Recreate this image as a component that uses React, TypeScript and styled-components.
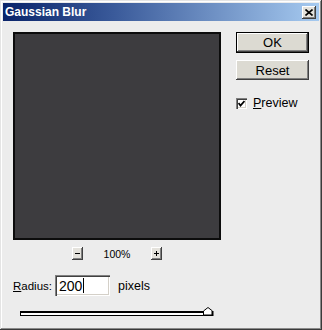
import { createGlobalStyle, styled } from "styled-components";

const GlobalStyle = createGlobalStyle`
  body {
    margin: 0;
    background: #ececec;
    font-family: "Liberation Sans", Arial, sans-serif;
  }
`;

const Window = styled.div`
  width: 322px;
  height: 330px;
  box-sizing: border-box;
  padding: 3px;
  background: #ececec;
  box-shadow: inset -1px -1px #3a3a3a, inset 1px 1px #e4e4e4,
    inset -2px -2px #8a8a8a, inset 2px 2px #ffffff;
  display: flex;
  flex-direction: column;
`;

const TitleBar = styled.div`
  height: 18px;
  display: flex;
  align-items: center;
  justify-content: space-between;
  padding: 0 3px 0 2px;
  background: linear-gradient(to right, #0a246a, #3a5a9a 35%, #a6caf0);
`;

const Title = styled.span`
  color: #fff;
  font-weight: bold;
  font-size: 12px;
`;

const Raised = styled.div`
  box-sizing: border-box;
  background: #e4e2dc;
  box-shadow: inset -1px -1px #404040, inset 1px 1px #ffffff,
    inset -2px -2px #808080;
  display: flex;
  align-items: center;
  justify-content: center;
  color: #000;
`;

const CloseButton = styled(Raised)`
  width: 14px;
  height: 13px;
`;

const Body = styled.div`
  flex: 1;
  padding: 11px 10px 0 10px;
  display: flex;
  flex-direction: column;
`;

const TopRow = styled.div`
  display: flex;
  gap: 15px;
`;

const PreviewColumn = styled.div`
  display: flex;
  flex-direction: column;
  width: 208px;
`;

const PreviewBox = styled.div`
  width: 208px;
  height: 208px;
  box-sizing: border-box;
  border: 2px solid #0c0c0c;
  background: #3d3c3f;
`;

const ZoomRow = styled.div`
  margin-top: 7px;
  display: flex;
  justify-content: center;
  align-items: center;
  gap: 20px;
`;

const ZoomButton = styled(Raised)`
  width: 11px;
  height: 13px;
`;

const ZoomLabel = styled.span`
  font-size: 10.5px;
  width: 28px;
  text-align: center;
`;

const SideColumn = styled.div`
  display: flex;
  flex-direction: column;
`;

const Button = styled(Raised)<{ $default?: boolean }>`
  width: 73px;
  height: ${(p) => (p.$default ? 21 : 20)}px;
  font-size: 13px;
  background: #dcdad2;
  box-shadow: ${(p) =>
    p.$default
      ? "inset 0 0 0 1px #000, inset -2px -2px #404040, inset 2px 2px #ffffff, inset -3px -3px #808080"
      : "inset -1px -1px #404040, inset 1px 1px #ffffff, inset -2px -2px #808080"};
  & + & {
    margin-top: 7px;
  }
`;

const CheckRow = styled.label`
  margin-top: 16px;
  display: flex;
  align-items: center;
  gap: 6px;
  font-size: 12.5px;
`;

const CheckBox = styled.span`
  width: 11px;
  height: 11px;
  box-sizing: border-box;
  background: #fff;
  box-shadow: inset 1px 1px #808080, inset 2px 2px #404040,
    inset -1px -1px #ffffff, inset -2px -2px #d4d0c8;
  display: flex;
  align-items: center;
  justify-content: center;
`;

const U = styled.span`
  text-decoration: underline;
`;

const RadiusRow = styled.div`
  margin-top: 15px;
  display: flex;
  align-items: center;
  font-size: 12.5px;
`;

const RadiusLabel = styled.span`
  width: 42px;
  font-size: 11.5px;
`;

const Field = styled.div`
  width: 55px;
  height: 21px;
  box-sizing: border-box;
  background: #fff;
  box-shadow: inset 1px 1px #808080, inset 2px 2px #404040,
    inset -1px -1px #ffffff, inset -2px -2px #d4d0c8;
  display: flex;
  align-items: center;
  padding-left: 4px;
  font-size: 14px;
`;

const Caret = styled.span`
  display: inline-block;
  width: 1px;
  height: 15px;
  background: #000;
  margin-left: 1px;
`;

const Unit = styled.span`
  margin-left: 8px;
`;

const SliderRow = styled.div`
  margin-top: 11px;
  padding-left: 7px;
  display: flex;
  align-items: flex-end;
  height: 9px;
`;

const Track = styled.div`
  width: 186px;
  height: 5px;
  box-sizing: border-box;
  border: 1px solid #000;
  border-top-width: 2px;
  background: #fff;
`;

const Thumb = styled.svg`
  margin-left: -3px;
  display: block;
`;

export default function App() {
  return (
    <>
      <GlobalStyle />
      <Window>
        <TitleBar>
          <Title>Gaussian Blur</Title>
          <CloseButton>
            <svg width="8" height="7" viewBox="0 0 8 7">
              <path d="M0.5 0.5 L7.5 6.5 M7.5 0.5 L0.5 6.5" stroke="#000" strokeWidth="1.6" />
            </svg>
          </CloseButton>
        </TitleBar>
        <Body>
          <TopRow>
            <PreviewColumn>
              <PreviewBox />
              <ZoomRow>
                <ZoomButton>
                  <svg width="5" height="1"><rect width="5" height="1" fill="#000" /></svg>
                </ZoomButton>
                <ZoomLabel>100%</ZoomLabel>
                <ZoomButton>
                  <svg width="5" height="5">
                    <rect y="2" width="5" height="1" fill="#000" />
                    <rect x="2" width="1" height="5" fill="#000" />
                  </svg>
                </ZoomButton>
              </ZoomRow>
            </PreviewColumn>
            <SideColumn>
              <Button $default>OK</Button>
              <Button>Reset</Button>
              <CheckRow>
                <CheckBox>
                  <svg width="7" height="7" viewBox="0 0 7 7">
                    <path d="M0.5 3 L2.5 5.5 L6.5 1" stroke="#000" strokeWidth="1.8" fill="none" />
                  </svg>
                </CheckBox>
                <span>
                  <U>P</U>review
                </span>
              </CheckRow>
            </SideColumn>
          </TopRow>
          <RadiusRow>
            <RadiusLabel>
              <U>R</U>adius:
            </RadiusLabel>
            <Field>
              200
              <Caret />
            </Field>
            <Unit>pixels</Unit>
          </RadiusRow>
          <SliderRow>
            <Track />
            <Thumb width="11" height="9" viewBox="0 0 11 9">
              <path d="M0.5 8.5 V4 L5 0.5 L9.5 4 V8.5 Z" fill="#fff" stroke="#000" strokeWidth="1" />
              <path d="M9.5 4 V8.5 H1" stroke="#000" strokeWidth="2" fill="none" />
            </Thumb>
          </SliderRow>
        </Body>
      </Window>
    </>
  );
}
